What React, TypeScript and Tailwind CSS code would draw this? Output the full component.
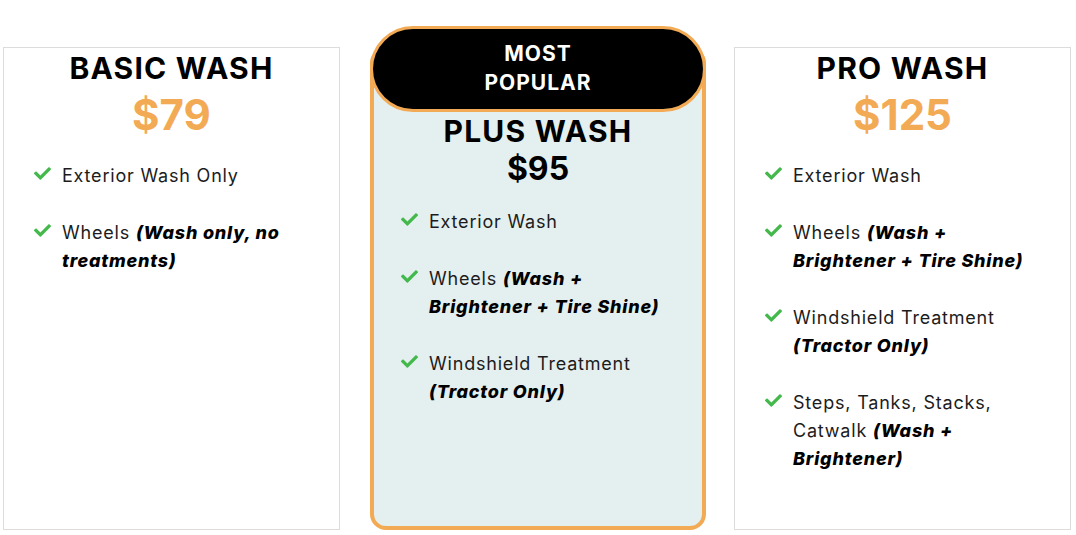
import React from 'react';
import { FaCheck } from 'react-icons/fa';

type Plan = {
  name: string;
  price: string;
  features: React.ReactNode[];
};

const Note: React.FC<{ children: React.ReactNode }> = ({ children }) => (
  <strong className="font-extrabold italic text-black">{children}</strong>
);

const basic: Plan = {
  name: 'BASIC WASH',
  price: '$79',
  features: [
    'Exterior Wash Only',
    <>
      Wheels <Note>(Wash only, no</Note>
      <br />
      <Note>treatments)</Note>
    </>,
  ],
};

const plus: Plan = {
  name: 'PLUS WASH',
  price: '$95',
  features: [
    'Exterior Wash',
    <>
      Wheels <Note>(Wash +</Note>
      <br />
      <Note>Brightener + Tire Shine)</Note>
    </>,
    <>
      Windshield Treatment
      <br />
      <Note>(Tractor Only)</Note>
    </>,
  ],
};

const pro: Plan = {
  name: 'PRO WASH',
  price: '$125',
  features: [
    'Exterior Wash',
    <>
      Wheels <Note>(Wash +</Note>
      <br />
      <Note>Brightener + Tire Shine)</Note>
    </>,
    <>
      Windshield Treatment
      <br />
      <Note>(Tractor Only)</Note>
    </>,
    <>
      Steps, Tanks, Stacks,
      <br />
      Catwalk <Note>(Wash +</Note>
      <br />
      <Note>Brightener)</Note>
    </>,
  ],
};

const FeatureList: React.FC<{ items: React.ReactNode[] }> = ({ items }) => (
  <ul className="flex flex-col gap-[29px] pl-[30px]">
    {items.map((item, i) => (
      <li key={i} className="flex items-start gap-[11px]">
        <FaCheck className="mt-[3px] shrink-0 text-[#43b94c]" size={17} />
        <span className="whitespace-nowrap text-[18px] leading-[28px] tracking-[0.8px] text-[#1c1c1c]">{item}</span>
      </li>
    ))}
  </ul>
);

const PlainCard: React.FC<{ plan: Plan; className?: string }> = ({ plan, className }) => (
  <div className={`h-[483px] border border-[#dcdcdc] bg-white ${className ?? ''}`}>
    <h2 className="pt-[2px] text-center text-[30px] leading-[36px] font-bold tracking-[1.2px] text-black">{plan.name}</h2>
    <p className="mt-[7px] text-center text-[42px] leading-[44px] font-bold text-[#f3aa55]">{plan.price}</p>
    <div className="mt-[25px]">
      <FeatureList items={plan.features} />
    </div>
  </div>
);

export default function App() {
  return (
    <div className="min-h-[535px] bg-white pt-[47px] pl-[3px] font-['Inter','Liberation_Sans',sans-serif]">
      <div className="flex items-start">
        <PlainCard plan={basic} className="w-[337px]" />

        <div className="ml-[30px] mr-[28px] flex h-[483px] w-[336px] flex-col rounded-2xl border-4 border-[#f3aa55] bg-[#e4eff0]">
          <div className="-mx-1 -mt-[25px] rounded-[44px] border-[3px] border-[#f3aa55] bg-black pt-[10px] pb-[12px] text-center text-[21px] leading-[29px] font-bold tracking-[1px] text-white">
            MOST
            <br />
            POPULAR
          </div>
          <h2 className="mt-[1px] text-center text-[30px] leading-[36px] font-bold tracking-[1.2px] text-black">{plus.name}</h2>
          <p className="text-center text-[32px] leading-[40px] font-bold text-black">{plus.price}</p>
          <div className="mt-[19px] -ml-[3px]">
            <FeatureList items={plus.features} />
          </div>
        </div>

        <PlainCard plan={pro} className="w-[337px]" />
      </div>
    </div>
  );
}
